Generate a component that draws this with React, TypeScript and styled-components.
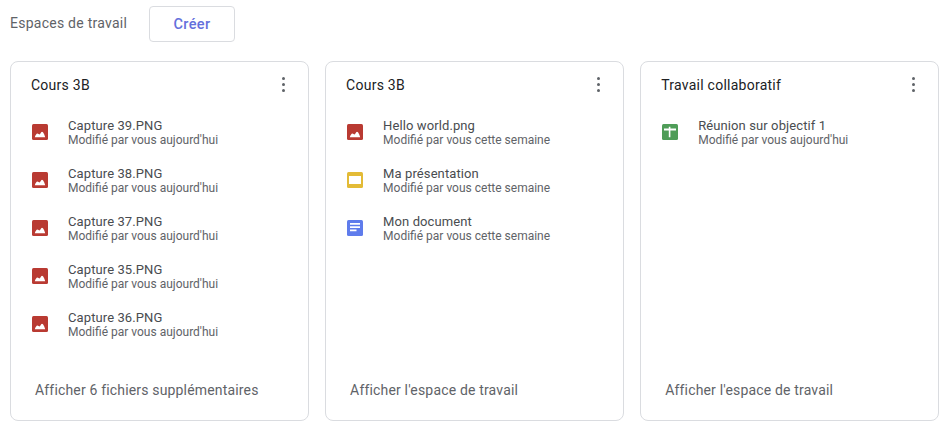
import React from 'react'
import styled, { createGlobalStyle } from 'styled-components'

type FileKind = 'image' | 'slides' | 'docs' | 'sheets'

type FileEntry = {
  name: string
  meta: string
  kind: FileKind
}

type Workspace = {
  title: string
  action: string
  files: FileEntry[]
}

const today = 'Modifié par vous aujourd\'hui'
const week = 'Modifié par vous cette semaine'

const workspaces: Workspace[] = [
  {
    title: 'Cours 3B',
    action: 'Afficher 6 fichiers supplémentaires',
    files: [
      { name: 'Capture 39.PNG', meta: today, kind: 'image' },
      { name: 'Capture 38.PNG', meta: today, kind: 'image' },
      { name: 'Capture 37.PNG', meta: today, kind: 'image' },
      { name: 'Capture 35.PNG', meta: today, kind: 'image' },
      { name: 'Capture 36.PNG', meta: today, kind: 'image' },
    ],
  },
  {
    title: 'Cours 3B',
    action: "Afficher l'espace de travail",
    files: [
      { name: 'Hello world.png', meta: week, kind: 'image' },
      { name: 'Ma présentation', meta: week, kind: 'slides' },
      { name: 'Mon document', meta: week, kind: 'docs' },
    ],
  },
  {
    title: 'Travail collaboratif',
    action: "Afficher l'espace de travail",
    files: [{ name: 'Réunion sur objectif 1', meta: today, kind: 'sheets' }],
  },
]

const FileIcon: React.FC<{ kind: FileKind }> = ({ kind }) => {
  if (kind === 'image') {
    return (
      <svg width="16" height="16" viewBox="0 0 16 16">
        <rect width="16" height="16" rx="1.5" fill="#b93a32" />
        <path
          d="M2.8 13.2C3.4 11.4 4.4 9.6 5.5 9.6 6.3 9.6 6.8 10.6 7.5 10.6 8.3 10.6 8.8 7.8 10 7.8 11.4 7.8 12.6 11 13.2 13.2Z"
          fill="#fff"
        />
      </svg>
    )
  }
  if (kind === 'slides') {
    return (
      <svg width="16" height="16" viewBox="0 0 16 16">
        <rect width="16" height="16" rx="1.5" fill="#e3bb36" />
        <rect x="2" y="4" width="12" height="8" fill="#fff" />
      </svg>
    )
  }
  if (kind === 'docs') {
    return (
      <svg width="16" height="16" viewBox="0 0 16 16">
        <rect width="16" height="16" rx="1.5" fill="#5f7cec" />
        <path d="M3 3h10v1.7H3zM3 6.3h10V8H3zM3 9.6h6.5v1.7H3z" fill="#fff" />
      </svg>
    )
  }
  return (
    <svg width="16" height="16" viewBox="0 0 16 16">
      <rect width="16" height="16" rx="1.5" fill="#4f9d58" />
      <path d="M6.8 2.7h1.6v1.8H14v1.9H8.400v6.900H6.800V6.400H2V4.500h4.800z" fill="#fff" />
    </svg>
  )
}

const App: React.FC = () => {
  return (
    <>
      <GlobalStyle />
      <Page>
        <TopBar>
          <Heading>Espaces de travail</Heading>
          <CreateButton>Créer</CreateButton>
        </TopBar>
        <CardGrid>
          {workspaces.map((workspace, index) => (
            <Card key={index}>
              <CardHeader>
                <CardTitle>{workspace.title}</CardTitle>
                <MoreButton>
                  <Dot />
                  <Dot />
                  <Dot />
                </MoreButton>
              </CardHeader>
              <FileList>
                {workspace.files.map((file) => (
                  <FileRow key={file.name}>
                    <IconSlot>
                      <FileIcon kind={file.kind} />
                    </IconSlot>
                    <FileText>
                      <FileName>{file.name}</FileName>
                      <FileMeta>{file.meta}</FileMeta>
                    </FileText>
                  </FileRow>
                ))}
              </FileList>
              <CardAction>{workspace.action}</CardAction>
            </Card>
          ))}
        </CardGrid>
      </Page>
    </>
  )
}

const GlobalStyle = createGlobalStyle`
  html, body {
    margin: 0;
    padding: 0;
    background: #fff;
  }
  body {
    font-family: Roboto, "Liberation Sans", sans-serif;
  }
`

const Page = styled.div`
  width: 946px;
  height: 429px;
  box-sizing: border-box;
  padding: 6px 6px 0 10px;
  overflow: hidden;
`

const TopBar = styled.div`
  display: flex;
  align-items: center;
  height: 36px;
`

const Heading = styled.h2`
  margin: 0 22px 0 0;
  width: 117px;
  white-space: nowrap;
  font-size: 14px;
  font-weight: 400;
  line-height: 34px;
  align-self: flex-start;
  color: #5f6368;
  letter-spacing: 0.25px;
`

const CreateButton = styled.button`
  width: 86px;
  height: 36px;
  box-sizing: border-box;
  padding: 0;
  background: #fff;
  border: 1px solid #dadce0;
  border-radius: 4px;
  font-family: Roboto, sans-serif;
  font-size: 14.5px;
  font-weight: 500;
  color: #6470dc;
  letter-spacing: 0.4px;
`

const CardGrid = styled.div`
  display: grid;
  grid-template-columns: repeat(3, 299.1px);
  column-gap: 16px;
  margin-top: 19px;
`

const Card = styled.section`
  height: 360px;
  box-sizing: border-box;
  border: 1px solid #dadce0;
  border-radius: 8px;
  padding: 0 0 0 20px;
  display: flex;
  flex-direction: column;
  background: #fff;
`

const CardHeader = styled.header`
  display: flex;
  align-items: center;
  justify-content: space-between;
  height: 45px;
  padding-right: 23px;
`

const CardTitle = styled.h3`
  margin: 0;
  font-size: 14px;
  font-weight: 400;
  color: #202124;
  letter-spacing: 0.25px;
`

const MoreButton = styled.div`
  display: flex;
  flex-direction: column;
  gap: 3px;
  align-items: center;
`

const Dot = styled.span`
  display: block;
  width: 3px;
  height: 3px;
  border-radius: 50%;
  background: #5f6368;
`

const FileList = styled.ul`
  list-style: none;
  margin: 0;
  padding: 12px 0 0;
  flex: 1;
  display: flex;
  flex-direction: column;
  gap: 20px;
`

const FileRow = styled.li`
  display: flex;
  align-items: center;
  height: 28px;
`

const IconSlot = styled.div`
  width: 36px;
  height: 16px;
  margin: 0 0 2px 1px;
  flex: none;
  line-height: 0;
`

const FileText = styled.div`
  display: flex;
  flex-direction: column;
`

const FileName = styled.div`
  font-size: 13px;
  line-height: 14px;
  color: #494c50;
  letter-spacing: 0.1px;
`

const FileMeta = styled.div`
  font-size: 12px;
  line-height: 14px;
  color: #5f6368;
`

const CardAction = styled.div`
  height: 60px;
  padding-left: 4px;
  font-size: 14px;
  line-height: 60px;
  color: #5f6368;
  letter-spacing: 0.17px;
`

export default App
